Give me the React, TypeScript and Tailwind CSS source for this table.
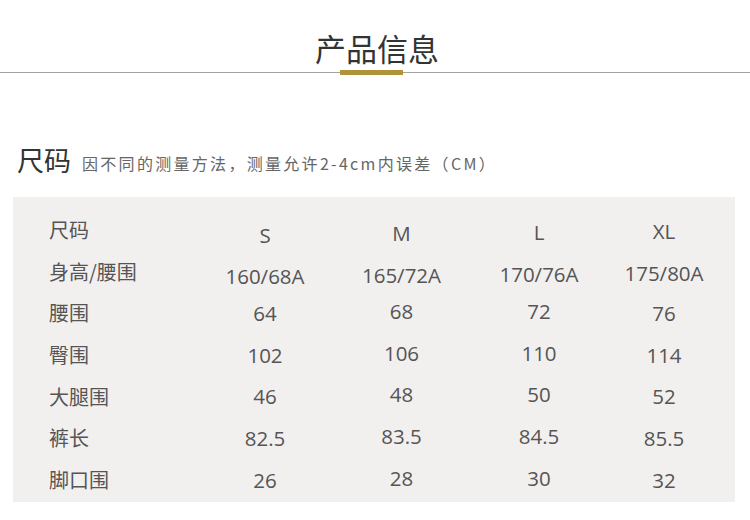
import React from 'react';

const cjk = '"Noto Sans CJK SC", "Noto Sans", sans-serif';
const latin = '"Open Sans", "Noto Sans CJK SC", sans-serif';

interface SizeRow {
  label: string;
  values: string[];
}

const rows: SizeRow[] = [
  { label: '尺码', values: ['S', 'M', 'L', 'XL'] },
  { label: '身高/腰围', values: ['160/68A', '165/72A', '170/76A', '175/80A'] },
  { label: '腰围', values: ['64', '68', '72', '76'] },
  { label: '臀围', values: ['102', '106', '110', '114'] },
  { label: '大腿围', values: ['46', '48', '50', '52'] },
  { label: '裤长', values: ['82.5', '83.5', '84.5', '85.5'] },
  { label: '脚口围', values: ['26', '28', '30', '32'] },
];

// the source table is a slightly uneven image, columns sit a few px off
const shift: string[][] = [
  ['translate-y-[5px]', 'translate-y-[3px]', 'translate-y-[2px]', 'translate-y-[1px]'],
  ['translate-y-[5px]', 'translate-y-[4px]', 'translate-y-[3px]', 'translate-y-[2px]'],
  ['translate-y-0', '-translate-y-[2px]', '-translate-y-[2px]', 'translate-y-0'],
  ['translate-y-0', '-translate-y-[2px]', '-translate-y-[2px]', 'translate-y-0'],
  ['translate-y-0', '-translate-y-[2px]', '-translate-y-[2px]', 'translate-y-0'],
  ['translate-y-0', '-translate-y-[2px]', '-translate-y-[2px]', 'translate-y-0'],
  ['translate-y-0', '-translate-y-[2px]', '-translate-y-[2px]', 'translate-y-0'],
];

const App: React.FC = () => {
  return (
    <div className="w-[750px] h-[520px] bg-white overflow-hidden" style={{ fontFamily: cjk }}>
      {/* heading */}
      <div className="pt-[31px]">
        <h1 className="text-center text-[31px] leading-[34px] text-[#333] pl-[4px]">产品信息</h1>
        <div className="flex items-center mt-[5px]">
          <div className="w-[340px] h-px bg-[#a3a3a3]" />
          <div className="w-[63px] h-[5px] bg-[#b1933a]" />
          <div className="flex-1 h-px bg-[#a3a3a3]" />
        </div>
      </div>

      {/* size title */}
      <div className="flex items-end mt-[68px] pl-[17px]">
        <span className="text-[27px] leading-[34px] text-[#333]">尺码</span>
        <span className="ml-[11px] mb-[3px] text-[16px] leading-[22px] tracking-[2.3px] text-[#666]">
          因不同的测量方法，测量允许2-4cm内误差（CM）
        </span>
      </div>

      {/* table */}
      <div className="mt-[20px] ml-[13px] w-[722px] h-[305px] bg-[#f2efef] pt-[12px]">
        {rows.map((row, r) => (
          <div key={row.label} className="grid grid-cols-[184px_136px_137px_138px_112px] h-[41.7px] items-center">
            <div className="pl-[36px] text-[20px] leading-none text-[#555]">{row.label}</div>
            {row.values.map((v, c) => (
              <div
                key={c}
                className={`text-center text-[20.5px] leading-none text-[#555] ${shift[r][c]}`}
                style={{ fontFamily: latin }}
              >
                {v}
              </div>
            ))}
          </div>
        ))}
      </div>
    </div>
  );
};

export default App;
